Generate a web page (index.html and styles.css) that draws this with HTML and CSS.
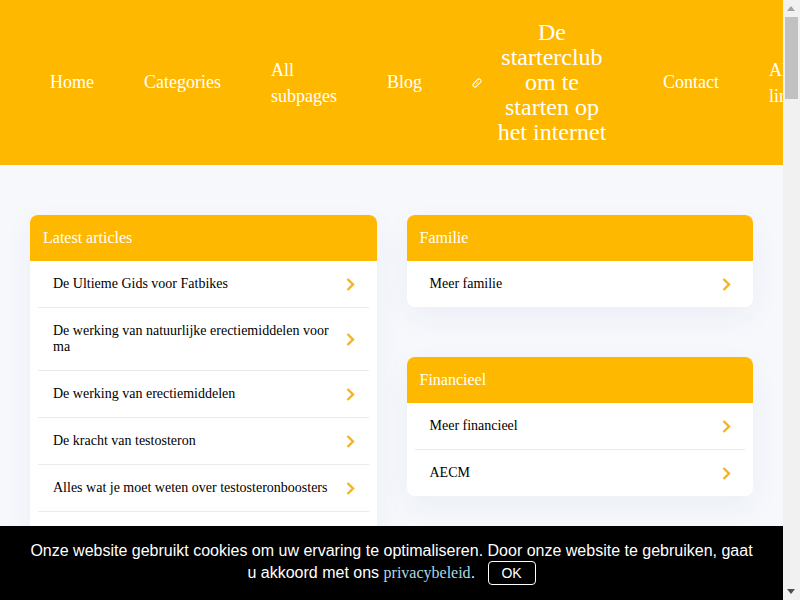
FILE: index.html
```html
<!DOCTYPE html>
<html lang="nl">

<head>
    <meta charset="UTF-8">
    <meta name="viewport" content="width=device-width, initial-scale=1.0">
    <title>De starterclub om te starten op het internet</title>
    <link rel="stylesheet" href="styles.css">
</head>

<body>

    <header class="site-header">
        <nav class="nav">
            <a class="nav-item" href="#">Home</a>
            <a class="nav-item" href="#">Categories</a>
            <a class="nav-item nav-wrap" href="#">All subpages</a>
            <a class="nav-item" href="#">Blog</a>
            <a class="nav-logo" href="#">
                <svg class="logo-icon" viewBox="0 0 10 10" width="10" height="10">
                    <g transform="rotate(-45 5 5)" fill="none" stroke="#fff">
                        <rect x="0.2" y="3" width="9.6" height="4" rx="2" stroke-width="1"/>
                        <path d="M3 5h4" stroke-width="0.8"/>
                    </g>
                </svg>
                <span class="logo-text">De starterclub om te starten op het internet</span>
            </a>
            <a class="nav-item" href="#">Contact</a>
            <a class="nav-item nav-wrap" href="#">All links</a>
        </nav>
    </header>

    <main class="content">
        <section class="card">
            <h2 class="card-title">Latest articles</h2>
            <ul class="card-list">
                <li><a href="#"><span>De Ultieme Gids voor Fatbikes</span><svg class="chevron" viewBox="0 0 9 13" width="9" height="13"><path d="M1.5 1 7 6.5 1.5 12"/></svg></a></li>
                <li><a href="#"><span>De werking van natuurlijke erectiemiddelen voor ma</span><svg class="chevron" viewBox="0 0 9 13" width="9" height="13"><path d="M1.5 1 7 6.5 1.5 12"/></svg></a></li>
                <li><a href="#"><span>De werking van erectiemiddelen</span><svg class="chevron" viewBox="0 0 9 13" width="9" height="13"><path d="M1.5 1 7 6.5 1.5 12"/></svg></a></li>
                <li><a href="#"><span>De kracht van testosteron</span><svg class="chevron" viewBox="0 0 9 13" width="9" height="13"><path d="M1.5 1 7 6.5 1.5 12"/></svg></a></li>
                <li><a href="#"><span>Alles wat je moet weten over testosteronboosters</span><svg class="chevron" viewBox="0 0 9 13" width="9" height="13"><path d="M1.5 1 7 6.5 1.5 12"/></svg></a></li>
                <li><a href="#"><span>Meer artikelen</span><svg class="chevron" viewBox="0 0 9 13" width="9" height="13"><path d="M1.5 1 7 6.5 1.5 12"/></svg></a></li>
            </ul>
        </section>

        <div class="side">
            <section class="card">
                <h2 class="card-title">Familie</h2>
                <ul class="card-list">
                    <li><a href="#"><span>Meer familie</span><svg class="chevron" viewBox="0 0 9 13" width="9" height="13"><path d="M1.5 1 7 6.5 1.5 12"/></svg></a></li>
                </ul>
            </section>
            <section class="card">
                <h2 class="card-title">Financieel</h2>
                <ul class="card-list">
                    <li><a href="#"><span>Meer financieel</span><svg class="chevron" viewBox="0 0 9 13" width="9" height="13"><path d="M1.5 1 7 6.5 1.5 12"/></svg></a></li>
                    <li><a href="#"><span>AECM</span><svg class="chevron" viewBox="0 0 9 13" width="9" height="13"><path d="M1.5 1 7 6.5 1.5 12"/></svg></a></li>
                </ul>
            </section>
        </div>
    </main>

    <div class="cookie-bar">
        <p><span>Onze website gebruikt cookies om uw ervaring te optimaliseren. Door onze website te gebruiken, gaat</span> <span>u akkoord met ons</span> <a href="#">privacybeleid</a>. <button type="button">OK</button></p>
    </div>

    <div class="scrollbar">
        <span class="arrow-up"></span>
        <span class="thumb"></span>
        <span class="arrow-down"></span>
    </div>

</body>

</html>
```

FILE: styles.css
```css
html {
    overflow: hidden;
}

body {
    margin: 0;
    width: 783px;
    background-color: #f6f8fc;
    font-family: "Liberation Serif", "Times New Roman", serif;
}

a {
    text-decoration: none;
    color: inherit;
}

.site-header {
    background-color: #ffb800;
    height: 165px;
    overflow: hidden;
}

.nav {
    display: flex;
    align-items: center;
    height: 100%;
    width: 900px;
    padding-left: 25px;
    color: #fff;
    font-size: 18px;
    line-height: 26.4px;
}

.nav-item {
    padding: 0 25px;
}

.nav-wrap {
    width: min-content;
    line-height: 26px;
}

.nav-logo {
    display: flex;
    align-items: center;
    padding: 0 25px;
}

.logo-icon {
    flex: none;
    margin-right: 9px;
}

.logo-text {
    width: 122px;
    font-size: 24px;
    line-height: 25px;
    text-align: center;
}

.content {
    display: grid;
    grid-template-columns: 1fr 1fr;
    gap: 30px;
    padding: 50px 30px 60px;
    align-items: start;
}

.side {
    display: flex;
    flex-direction: column;
    gap: 50px;
}

.card {
    background-color: #fff;
    border-radius: 8px;
    box-shadow: 0 10px 30px rgba(40, 60, 120, 0.05);
    overflow: hidden;
}

.card-title {
    margin: 0;
    padding: 14px 13px;
    background-color: #ffb800;
    color: #fff;
    font-size: 16px;
    font-weight: normal;
    line-height: 18px;
}

.card-list {
    list-style: none;
    margin: 0;
    padding: 0 8px;
}

.card-list li {
    border-bottom: 1px solid #e9ecef;
}

.card-list li:last-child {
    border-bottom: none;
}

.card-list a {
    display: flex;
    align-items: center;
    justify-content: space-between;
    gap: 15px;
    padding: 15px 14px 15px 15px;
    color: #000;
    font-size: 14px;
    line-height: 16px;
}

.chevron {
    flex: none;
    fill: none;
    stroke: #f2b425;
    stroke-width: 2.4;
}

.cookie-bar {
    position: fixed;
    left: 0;
    right: 17px;
    bottom: 0;
    height: 74px;
    box-sizing: border-box;
    padding: 14px 30px 0;
    background-color: #000;
    color: #fff;
    font-family: "Liberation Sans", Arial, sans-serif;
    font-size: 16px;
    line-height: 21px;
    text-align: center;
}

.cookie-bar p {
    margin: 0;
}

.cookie-bar a {
    color: #add8e6;
    font-family: "Liberation Serif", "Times New Roman", serif;
}

.cookie-bar button {
    height: 24px;
    width: 48px;
    margin-left: 8px;
    padding: 0;
    background-color: #000;
    color: #fff;
    border: 1px solid #fff;
    border-radius: 4px;
    font-family: "Liberation Sans", Arial, sans-serif;
    font-size: 14px;
}

.scrollbar {
    position: fixed;
    top: 0;
    right: 0;
    bottom: 0;
    width: 17px;
    background-color: #f1f1f1;
}

.thumb {
    position: absolute;
    top: 17px;
    left: 2px;
    width: 13px;
    height: 82px;
    background-color: #c1c1c1;
}

.arrow-up,
.arrow-down {
    position: absolute;
    left: 4px;
    border-left: 4px solid transparent;
    border-right: 4px solid transparent;
}

.arrow-up {
    top: 6px;
    border-bottom: 5px solid #a3a3a3;
}

.arrow-down {
    bottom: 6px;
    border-top: 5px solid #505050;
}
```
